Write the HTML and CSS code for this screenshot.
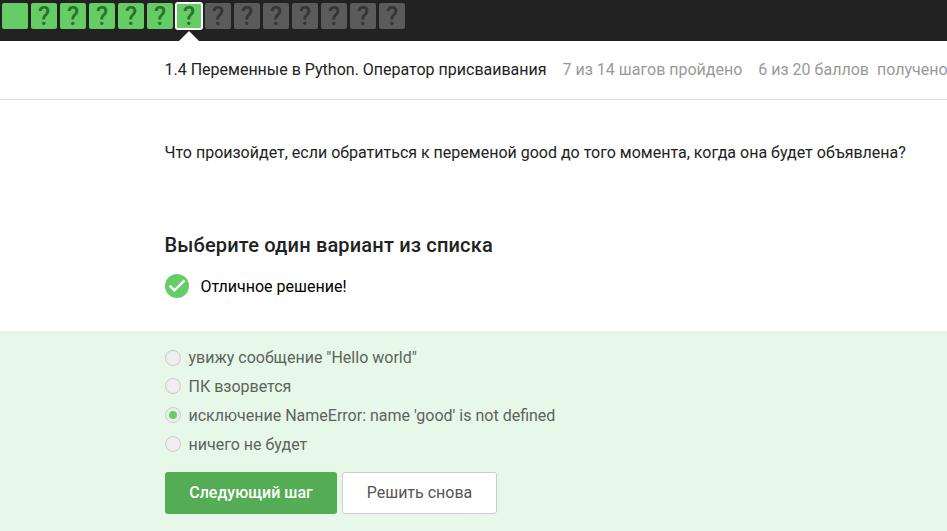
FILE: index.html
```html
<!DOCTYPE html>
<html lang="ru">
<head>
<meta charset="utf-8">
<title>Переменные в Python</title>
<link rel="stylesheet" href="styles.css">
</head>
<body>
<nav class="steps">
  <span class="step done"></span>
  <span class="step done">?</span>
  <span class="step done">?</span>
  <span class="step done">?</span>
  <span class="step done">?</span>
  <span class="step done">?</span>
  <span class="step done active">?</span>
  <span class="step">?</span>
  <span class="step">?</span>
  <span class="step">?</span>
  <span class="step">?</span>
  <span class="step">?</span>
  <span class="step">?</span>
  <span class="step">?</span>
</nav>
<header class="lesson">
  <span class="lesson-title">1.4 Переменные в Python. Оператор присваивания</span>
  <span class="progress">7 из 14 шагов пройдено</span>
  <span class="score"><span>6 из 20 баллов</span><span>получено</span></span>
</header>
<main>
  <section class="task">
    <p class="question">Что произойдет, если обратиться к переменой good до того момента, когда она будет объявлена?</p>
    <h2>Выберите один вариант из списка</h2>
    <div class="feedback">
      <svg width="24" height="24" viewBox="0 0 24 24"><circle cx="12" cy="12" r="12" fill="#66cc66"/><path d="M4.6 11.6l4.8 4.8L19.6 6.4" fill="none" stroke="#fff" stroke-width="2.4"/></svg>
      <span>Отличное решение!</span>
    </div>
  </section>
  <section class="answer">
    <div class="options">
      <label class="option"><i class="radio"></i><span>увижу сообщение "Hello world"</span></label>
      <label class="option"><i class="radio"></i><span>ПК взорвется</span></label>
      <label class="option"><i class="radio checked"></i><span>исключение NameError: name 'good' is not defined</span></label>
      <label class="option"><i class="radio"></i><span>ничего не будет</span></label>
    </div>
    <div class="actions">
      <button class="button primary">Следующий шаг</button>
      <button class="button secondary">Решить снова</button>
    </div>
  </section>
</main>
</body>
</html>
```
FILE: styles.css
```css
* { box-sizing: border-box; }
body {
  margin: 0;
  height: 531px;
  overflow: hidden;
  background: #fff;
  color: #222;
  font: 16px/24px Roboto, "Liberation Sans", sans-serif;
}
.steps {
  display: flex;
  gap: 3px;
  height: 41px;
  padding: 3px 2px 0;
  background: #222;
}
.step {
  position: relative;
  width: 26px;
  height: 26px;
  border-radius: 2px;
  background: #5b5b5b;
  color: #353535;
  font-size: 25px;
  font-weight: 500;
  line-height: 27px;
  text-align: center;
}
.step.done { background: #66cc66; color: #2b722b; }
.step.active { box-shadow: inset 0 0 0 1px #fff, 0 0 0 1px #fff; }
.step.active::after {
  content: "";
  position: absolute;
  left: 3px;
  top: 28px;
  border: 10px solid transparent;
  border-top: 0;
  border-bottom-color: #fff;
}
.lesson {
  display: flex;
  align-items: center;
  gap: 16px;
  height: 59px;
  padding: 0 0 0 164.5px;
  border-bottom: 1px solid #ddd;
  white-space: nowrap;
}
.progress, .score { color: #999; }
.score { display: flex; gap: 8px; }
.task { height: 231px; padding: 41px 0 0 164.5px; white-space: nowrap; }
.question { margin: 0; }
h2 { margin: 66px 0 0; font-size: 20px; font-weight: 500; line-height: 28px; letter-spacing: .17px; }
.feedback {
  display: flex;
  gap: 12px;
  margin-top: 15px;
  color: #000;
  line-height: 26px;
}
.answer {
  height: 200px;
  padding: 12.45px 0 0 165px;
  background: #e7f8e9;
}
.option {
  display: flex;
  align-items: center;
  gap: 7.5px;
  height: 28.7px;
  color: #5c645c;
}
.option span { padding-top: 1.4px; }
.radio {
  display: grid;
  place-items: center;
  width: 16px;
  height: 16px;
  border: 1px solid #ccc;
  border-radius: 50%;
  background: #eee;
}
.radio.checked::after {
  content: "";
  width: 8px;
  height: 8px;
  border-radius: 50%;
  background: #66cc66;
}
.actions { display: flex; gap: 5px; margin-top: 13.75px; }
.button {
  height: 42px;
  padding: 0;
  border: 0;
  border-radius: 3px;
  font: 16px/24px Roboto, "Liberation Sans", sans-serif;
}
.primary { width: 172px; background: #54ad54; color: #fff; font-weight: 500; }
.secondary { width: 155px; border: 1px solid #ccc; background: #fff; color: #555; }
```
